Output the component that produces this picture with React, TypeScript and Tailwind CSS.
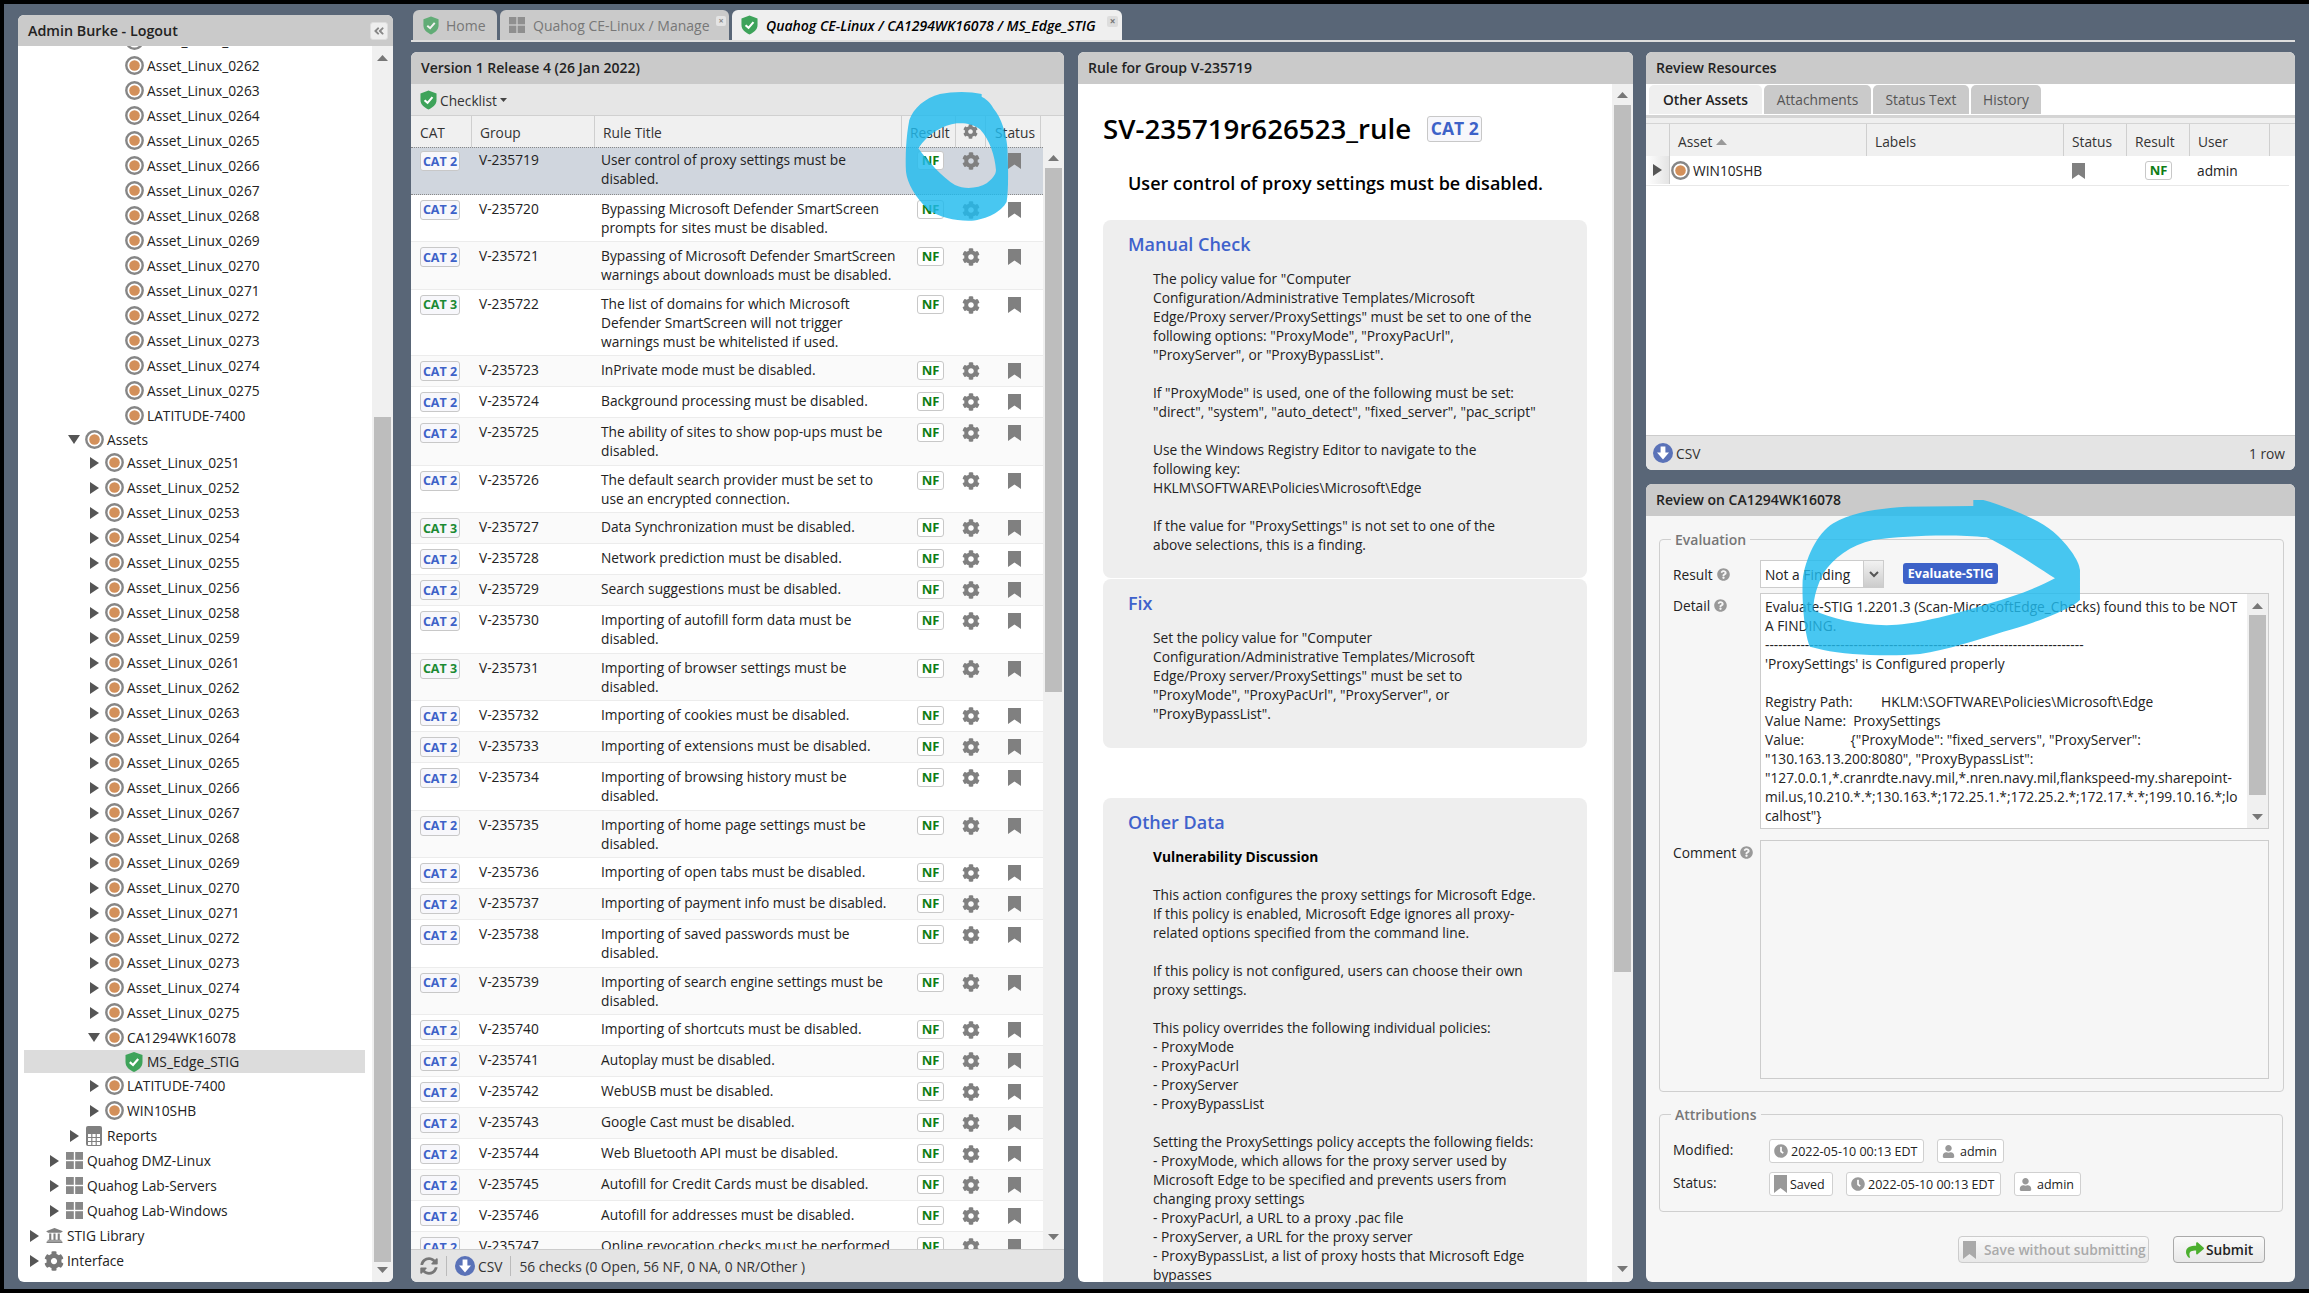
import React from "react";
import { FaCog, FaUniversity, FaClock, FaUser, FaQuestionCircle, FaShare, FaSyncAlt, FaAngleDoubleLeft } from "react-icons/fa";

type TreeKind = "asset" | "shield" | "coll" | "report" | "lib" | "gear";
type TreeRow = { l: number; t: string; k: TreeKind; a?: "r" | "d"; h?: string; sel?: boolean };

const nums1 = ["0261","0262","0263","0264","0265","0266","0267","0268","0269","0270","0271","0272","0273","0274","0275"];
const nums2 = ["0251","0252","0253","0254","0255","0256","0258","0259","0261","0262","0263","0264","0265","0266","0267","0268","0269","0270","0271","0272","0273","0274","0275"];

const tree: TreeRow[] = [
  ...nums1.map((n) => ({ l: 4, t: `Asset_Linux_${n}`, k: "asset" as TreeKind })),
  { l: 4, t: "LATITUDE-7400", k: "asset" },
  { l: 2, t: "Assets", k: "asset", a: "d", h: "h-[22px]" },
  ...nums2.map((n) => ({ l: 3, t: `Asset_Linux_${n}`, k: "asset" as TreeKind, a: "r" as const })),
  { l: 3, t: "CA1294WK16078", k: "asset", a: "d" },
  { l: 4, t: "MS_Edge_STIG", k: "shield", h: "h-[23px]", sel: true },
  { l: 3, t: "LATITUDE-7400", k: "asset", a: "r" },
  { l: 3, t: "WIN10SHB", k: "asset", a: "r" },
  { l: 2, t: "Reports", k: "report", a: "r" },
  { l: 1, t: "Quahog DMZ-Linux", k: "coll", a: "r" },
  { l: 1, t: "Quahog Lab-Servers", k: "coll", a: "r" },
  { l: 1, t: "Quahog Lab-Windows", k: "coll", a: "r" },
  { l: 0, t: "STIG Library", k: "lib", a: "r" },
  { l: 0, t: "Interface", k: "gear", a: "r" },
];

const levelPad: Record<number, string> = { 0: "pl-[6px]", 1: "pl-[26px]", 2: "pl-[46px]", 3: "pl-[66px]", 4: "pl-[86px]" };

const rows: [string, number, string, number][] = [
  ["V-235719", 2, "User control of proxy settings must be\ndisabled.", 2],
  ["V-235720", 2, "Bypassing Microsoft Defender SmartScreen\nprompts for sites must be disabled.", 2],
  ["V-235721", 2, "Bypassing of Microsoft Defender SmartScreen\nwarnings about downloads must be disabled.", 2],
  ["V-235722", 3, "The list of domains for which Microsoft\nDefender SmartScreen will not trigger\nwarnings must be whitelisted if used.", 3],
  ["V-235723", 2, "InPrivate mode must be disabled.", 1],
  ["V-235724", 2, "Background processing must be disabled.", 1],
  ["V-235725", 2, "The ability of sites to show pop-ups must be\ndisabled.", 2],
  ["V-235726", 2, "The default search provider must be set to\nuse an encrypted connection.", 2],
  ["V-235727", 3, "Data Synchronization must be disabled.", 1],
  ["V-235728", 2, "Network prediction must be disabled.", 1],
  ["V-235729", 2, "Search suggestions must be disabled.", 1],
  ["V-235730", 2, "Importing of autofill form data must be\ndisabled.", 2],
  ["V-235731", 3, "Importing of browser settings must be\ndisabled.", 2],
  ["V-235732", 2, "Importing of cookies must be disabled.", 1],
  ["V-235733", 2, "Importing of extensions must be disabled.", 1],
  ["V-235734", 2, "Importing of browsing history must be\ndisabled.", 2],
  ["V-235735", 2, "Importing of home page settings must be\ndisabled.", 2],
  ["V-235736", 2, "Importing of open tabs must be disabled.", 1],
  ["V-235737", 2, "Importing of payment info must be disabled.", 1],
  ["V-235738", 2, "Importing of saved passwords must be\ndisabled.", 2],
  ["V-235739", 2, "Importing of search engine settings must be\ndisabled.", 2],
  ["V-235740", 2, "Importing of shortcuts must be disabled.", 1],
  ["V-235741", 2, "Autoplay must be disabled.", 1],
  ["V-235742", 2, "WebUSB must be disabled.", 1],
  ["V-235743", 2, "Google Cast must be disabled.", 1],
  ["V-235744", 2, "Web Bluetooth API must be disabled.", 1],
  ["V-235745", 2, "Autofill for Credit Cards must be disabled.", 1],
  ["V-235746", 2, "Autofill for addresses must be disabled.", 1],
  ["V-235747", 2, "Online revocation checks must be performed.", 1],
];

const rowH: Record<number, string> = { 1: "h-[31px]", 2: "h-[47.5px]", 3: "h-[66.5px]" };

const AssetIcon = ({ s = 19 }: { s?: number }) => (
  <svg width={s} height={s} viewBox="0 0 19 19" className="shrink-0">
    <circle cx="9.5" cy="9.5" r="8.2" fill="#fff" stroke="#868686" strokeWidth="2.4" />
    <circle cx="9.5" cy="9.5" r="5.3" fill="#d3905a" />
  </svg>
);
const Shield = ({ w = 18, h = 20 }: { w?: number; h?: number }) => (
  <svg width={w} height={h} viewBox="0 0 18 20" className="shrink-0">
    <path d="M9 0 L17.5 3 V10 C17.5 15 13.5 18 9 20 C4.5 18 .5 15 .5 10 V3 Z" fill="#3ea35a" />
    <path d="M4.8 10.2 L8 13 L13.2 7" fill="none" stroke="#fff" strokeWidth="2.2" />
  </svg>
);
const Coll = ({ c = "#888", s = 17 }: { c?: string; s?: number }) => (
  <svg width={s} height={s} viewBox="0 0 17 17" className="shrink-0" fill={c}>
    <rect x="0" y="0" width="7.8" height="7.8" />
    <rect x="9.2" y="0" width="7.8" height="7.8" />
    <rect x="0" y="9.2" width="7.8" height="7.8" />
    <rect x="9.2" y="9.2" width="7.8" height="7.8" />
  </svg>
);
const Report = () => (
  <svg width="16" height="20" viewBox="0 0 16 20" className="shrink-0">
    <rect width="16" height="20" rx="2" fill="#808080" />
    <g fill="#fff">
      {[2, 6.4, 10.8].map((x) => [8, 12, 16].map((y) => <rect key={`${x}-${y}`} x={x} y={y} width="3.2" height="3" />))}
    </g>
  </svg>
);
const Book = ({ c = "#808080", w = 13, h = 16 }: { c?: string; w?: number; h?: number }) => (
  <svg width={w} height={h} viewBox="0 0 13 16" className="shrink-0" preserveAspectRatio="none">
    <path d="M0 0 H13 V16 L6.5 11.5 L0 16 Z" fill={c} />
  </svg>
);
const Down = ({ s = 20 }: { s?: number }) => (
  <svg width={s} height={s} viewBox="0 0 20 20" className="shrink-0">
    <circle cx="10" cy="10" r="10" fill="#5a72b8" />
    <path d="M7.6 3.5 H12.4 V9.5 H16 L10 16.5 L4 9.5 H7.6 Z" fill="#fff" />
  </svg>
);
const ArrowR = ({ c = "#555" }: { c?: string }) => (
  <svg width="9" height="12" viewBox="0 0 9 12"><path d="M0 0 L9 6 L0 12 Z" fill={c} /></svg>
);
const ArrowD = () => (
  <svg width="12" height="9" viewBox="0 0 12 9"><path d="M0 0 H12 L6 9 Z" fill="#555" /></svg>
);
const Up = ({ c = "#777" }: { c?: string }) => (
  <svg width="11" height="6" viewBox="0 0 11 6" className="shrink-0"><path d="M0 6 L5.5 0 L11 6 Z" fill={c} /></svg>
);
const Dn = ({ c = "#777" }: { c?: string }) => (
  <svg width="11" height="6" viewBox="0 0 11 6" className="shrink-0"><path d="M0 0 H11 L5.5 6 Z" fill={c} /></svg>
);

const Scrollbar = ({ outer, thumb }: { outer: string; thumb: string }) => (
  <div className={`w-[21px] shrink-0 flex flex-col items-center bg-[#f0f0f0] ${outer}`}>
    <Up />
    <div className={`w-[17px] bg-[#bdbdbd] shrink-0 ${thumb}`} />
    <div className="flex-1" />
    <Dn />
  </div>
);

const TreeIcon = ({ k }: { k: TreeKind }) => {
  if (k === "asset") return <AssetIcon />;
  if (k === "shield") return <Shield />;
  if (k === "coll") return <Coll />;
  if (k === "report") return <Report />;
  if (k === "lib") return <FaUniversity className="text-[17px] text-[#808080]" />;
  return <FaCog className="text-[20px] text-[#777]" />;
};

const Header = ({ children }: { children: React.ReactNode }) => (
  <div className="h-[32px] shrink-0 bg-[#cacaca] flex items-center px-[10px] pb-[2px] font-semibold text-[14px] text-[#222]">{children}</div>
);

const CatBadge = ({ n }: { n: number }) => (
  <div className={`w-[40px] h-[20px] rounded-[3px] border border-[#c8c8c8] bg-[#f7f7fb] flex items-center justify-center font-bold text-[12.5px] ${n === 3 ? "text-[#1b8a33]" : "text-[#3d62c8]"}`}>
    CAT {n}
  </div>
);
const NF = () => (
  <div className="w-[27px] h-[19px] rounded-[3px] border border-[#c8c8c8] bg-white flex items-center justify-center font-bold text-[13px] text-[#0f7d14]">NF</div>
);

const Th = ({ w, children, cls = "" }: { w: string; children?: React.ReactNode; cls?: string }) => (
  <div className={`${w} shrink-0 h-full flex items-center border-r border-[#cfcfcf] ${cls}`}>{children}</div>
);

const manual = `The policy value for "Computer
Configuration/Administrative Templates/Microsoft
Edge/Proxy server/ProxySettings" must be set to one of the
following options: "ProxyMode", "ProxyPacUrl",
"ProxyServer", or "ProxyBypassList".

If "ProxyMode" is used, one of the following must be set:
"direct", "system", "auto_detect", "fixed_server", "pac_script"

Use the Windows Registry Editor to navigate to the
following key:
HKLM\\SOFTWARE\\Policies\\Microsoft\\Edge

If the value for "ProxySettings" is not set to one of the
above selections, this is a finding.`;

const fix = `Set the policy value for "Computer
Configuration/Administrative Templates/Microsoft
Edge/Proxy server/ProxySettings" must be set to
"ProxyMode", "ProxyPacUrl", "ProxyServer", or
"ProxyBypassList".`;

const other = `
This action configures the proxy settings for Microsoft Edge.
If this policy is enabled, Microsoft Edge ignores all proxy-
related options specified from the command line.

If this policy is not configured, users can choose their own
proxy settings.

This policy overrides the following individual policies:
- ProxyMode
- ProxyPacUrl
- ProxyServer
- ProxyBypassList

Setting the ProxySettings policy accepts the following fields:
- ProxyMode, which allows for the proxy server used by
Microsoft Edge to be specified and prevents users from
changing proxy settings
- ProxyPacUrl, a URL to a proxy .pac file
- ProxyServer, a URL for the proxy server
- ProxyBypassList, a list of proxy hosts that Microsoft Edge
bypasses
`;

const detail = `Evaluate-STIG 1.2201.3 (Scan-MicrosoftEdge_Checks) found this to be NOT
A FINDING.
------------------------------------------------------------------------
'ProxySettings' is Configured properly

Registry Path:\u00a0\u00a0\u00a0\u00a0\u00a0\u00a0\u00a0\u00a0HKLM:\\SOFTWARE\\Policies\\Microsoft\\Edge
Value Name:\u00a0\u00a0ProxySettings
Value:\u00a0\u00a0\u00a0\u00a0\u00a0\u00a0\u00a0\u00a0\u00a0\u00a0\u00a0\u00a0\u00a0{"ProxyMode": "fixed_servers", "ProxyServer":
"130.163.13.200:8080", "ProxyBypassList":
"127.0.0.1,*.cranrdte.navy.mil,*.nren.navy.mil,flankspeed-my.sharepoint-
mil.us,10.210.*.*;130.163.*;172.25.1.*;172.25.2.*;172.17.*.*;199.10.16.*;lo
calhost"}`;

const Pill = ({ w, children }: { w: string; children: React.ReactNode }) => (
  <div className={`${w} h-[24px] rounded-[3px] border border-[#d0d0d0] bg-white flex items-center gap-[3px] pl-[4px] text-[12.5px] text-[#222]`}>{children}</div>
);
const Help = () => <FaQuestionCircle className="text-[13px] text-[#999] ml-[4px] shrink-0" />;

export default function App() {
  return (
    <div className="relative w-[2309px] h-[1293px] overflow-hidden bg-black pt-[4px] pb-[4px] pl-[4px] font-['Open_Sans',sans-serif] text-[13.75px] leading-[19px] text-[#222]">
      <div className="h-full flex bg-[#596677] pl-[14px] pr-[14px] pb-[7px]">
        {/* Navigation */}
        <div className="w-[375px] shrink-0 mt-[11px] flex flex-col rounded-[6px] overflow-hidden bg-white">
          <div className="h-[31px] shrink-0 bg-[#cacaca] flex items-center justify-between pl-[10px] pr-[5px] font-semibold text-[14.3px] text-[#222]">
            <span>Admin Burke - Logout</span>
            <div className="w-[18px] h-[18px] rounded-[3px] bg-[#eee] border border-[#ddd] flex items-center justify-center text-[#888]"><FaAngleDoubleLeft className="text-[12px]" /></div>
          </div>
          <div className="flex-1 flex min-h-0">
            <div className="flex-1 overflow-hidden">
              <div className="-mt-[18px]">
                {tree.map((r, i) => (
                  <div key={i} className={`flex items-center ${r.h ?? "h-[25px]"} ${levelPad[r.l]} ml-[6px] mr-[7px] ${r.sel ? "bg-[#dcdcdc]" : ""}`}>
                    <span className="w-[14px] shrink-0 flex items-center justify-start">
                      {r.a === "r" && <ArrowR />}
                      {r.a === "d" && <span className="-ml-[2px] flex"><ArrowD /></span>}
                    </span>
                    <span className="w-[20px] shrink-0 flex items-center justify-center"><TreeIcon k={r.k} /></span>
                    <span className="ml-[3px] whitespace-nowrap">{r.t}</span>
                  </div>
                ))}
              </div>
            </div>
            <Scrollbar outer="pt-[9px] pb-[9px]" thumb="mt-[356px] h-[845px]" />
          </div>
        </div>

        {/* Right column */}
        <div className="flex-1 ml-[18px] mt-[6px] flex flex-col min-w-0">
          <div className="flex pl-[2px] gap-[3px] h-[30px] shrink-0 text-[14px]">
            <div className="w-[84px] bg-[#cacaca] rounded-t-[6px] flex items-center pl-[10px] gap-[7px] text-[#777]">
              <span className="opacity-75 flex"><Shield w={16} h={19} /></span><span>Home</span>
            </div>
            <div className="relative w-[229px] bg-[#cacaca] rounded-t-[6px] flex items-center pl-[9px] gap-[8px] text-[#777]">
              <Coll c="#8f8f8f" s={16} /><span>Quahog CE-Linux / Manage</span>
              <span className="absolute right-[3px] top-[6px] w-[10px] h-[10px] rounded-[2px] bg-[#e4e4e4] text-[#888] text-[9px] leading-[10px] text-center font-bold">×</span>
            </div>
            <div className="relative w-[390px] bg-[#efefef] rounded-t-[6px] flex items-center pl-[9px] gap-[8px] italic font-semibold text-black">
              <Shield w={17} h={20} /><span>Quahog CE-Linux / CA1294WK16078 / MS_Edge_STIG</span>
              <span className="absolute right-[4px] top-[6px] w-[11px] h-[11px] rounded-[2px] bg-[#ddd] text-[#777] text-[10px] leading-[11px] text-center not-italic font-bold">×</span>
            </div>
          </div>
          <div className="h-[2px] shrink-0 bg-[#dedede]" />
          <div className="flex-1 mt-[10px] flex min-h-0">
            {/* Checklist */}
            <div className="w-[653px] shrink-0 flex flex-col rounded-[6px] overflow-hidden bg-white">
              <Header>Version 1 Release 4 (26 Jan 2022)</Header>
              <div className="h-[32px] shrink-0 bg-[#e6e6e6] border-b border-[#d0d0d0] flex items-center pl-[9px] gap-[3px] pt-[1px]">
                <Shield w={17} h={20} />
                <span className="text-[#333]">Checklist</span>
                <svg width="7" height="4" viewBox="0 0 7 4"><path d="M0 0 H7 L3.5 4 Z" fill="#444" /></svg>
              </div>
              <div className="h-[31px] shrink-0 bg-[#f0f0f0] flex items-center text-[#333]">
                <Th w="w-[61px]" cls="pl-[9px] pt-[2px]">CAT</Th>
                <Th w="w-[123px]" cls="pl-[8px] pt-[2px]">Group</Th>
                <Th w="w-[307px]" cls="pl-[8px] pt-[2px]">Rule Title</Th>
                <Th w="w-[54px]" cls="pl-[8px] pt-[2px]">Result</Th>
                <Th w="w-[30px]" cls="justify-center"><FaCog className="text-[15px] text-[#808080]" /></Th>
                <Th w="w-[55px]" cls="pl-[9px] pt-[2px]">Status</Th>
              </div>
              <div className="flex-1 flex min-h-0">
                <div className="flex-1 overflow-hidden">
                  {rows.map(([g, c, t, n], i) => (
                    <div key={g} className={`flex items-start box-border ${rowH[n]} ${i === 0 ? "bg-[#d0d6de] border-y border-dotted border-[#888] pt-[3px]" : i % 2 ? "pt-[5px] bg-white border-b border-[#ececec]" : "pt-[5px] bg-[#fafafa] border-b border-[#ececec]"}`}>
                      <div className="w-[61px] shrink-0 pl-[9px]"><CatBadge n={c} /></div>
                      <div className="w-[123px] shrink-0 pl-[7px] -mt-[1px]">{g}</div>
                      <div className="w-[307px] shrink-0 pl-[6px] -mt-[1px] leading-[19px] whitespace-pre-line">{t}</div>
                      <div className="w-[54px] shrink-0 pl-[15px]"><NF /></div>
                      <div className="w-[30px] shrink-0 flex justify-center pt-[1px]"><FaCog className="text-[18px] text-[#808080]" /></div>
                      <div className="w-[55px] shrink-0 pl-[22px] pt-[2px]"><Book /></div>
                    </div>
                  ))}
                </div>
                <Scrollbar outer="pt-[8px] pb-[9px]" thumb="mt-[7px] h-[524px]" />
              </div>
              <div className="h-[33px] shrink-0 bg-[#e4e4e4] border-t border-[#ccc] flex items-center pl-[9px] text-[#333]">
                <FaSyncAlt className="text-[18px] text-[#777]" />
                <span className="w-px h-[20px] bg-[#bbb] ml-[8px] mr-[8px]" />
                <Down />
                <span className="ml-[3px]">CSV</span>
                <span className="w-px h-[20px] bg-[#bbb] ml-[8px] mr-[8px]" />
                <span>56 checks (0 Open, 56 NF, 0 NA, 0 NR/Other )</span>
              </div>
            </div>

            {/* Rule */}
            <div className="w-[555px] ml-[14px] shrink-0 flex flex-col rounded-[6px] overflow-hidden bg-white">
              <Header>Rule for Group V-235719</Header>
              <div className="flex-1 flex min-h-0">
                <div className="flex-1 overflow-hidden pl-[25px]">
                  <div className="flex items-center pt-[30px] h-[59px]">
                    <span className="text-[27.7px] leading-[29px] font-semibold text-black">SV-235719r626523_rule</span>
                    <span className="ml-[16px] w-[55px] h-[26px] rounded-[3px] border border-[#c8c8c8] bg-[#f7f7fb] flex items-center justify-center font-bold text-[17.5px] text-[#3d62c8]">CAT 2</span>
                  </div>
                  <div className="mt-[28px] pl-[25px] text-[18px] leading-[24px] font-semibold text-black">User control of proxy settings must be disabled.</div>
                  <div className="mt-[25px] w-[484px] h-[358px] bg-[#eeeeee] rounded-[8px] pl-[25px] pt-[11px]">
                    <div className="text-[18px] leading-[26px] font-semibold text-[#3f62cc]">Manual Check</div>
                    <div className="pl-[25px] mt-[12px] whitespace-pre">{manual}</div>
                  </div>
                  <div className="mt-[1px] w-[484px] h-[169px] bg-[#eeeeee] rounded-[8px] pl-[25px] pt-[11px]">
                    <div className="text-[18px] leading-[26px] font-semibold text-[#3f62cc]">Fix</div>
                    <div className="pl-[25px] mt-[12px] whitespace-pre">{fix}</div>
                  </div>
                  <div className="mt-[50px] w-[484px] h-[600px] bg-[#eeeeee] rounded-[8px] pl-[25px] pt-[11px]">
                    <div className="text-[18px] leading-[26px] font-semibold text-[#3f62cc]">Other Data</div>
                    <div className="pl-[25px] mt-[12px] font-bold text-black">Vulnerability Discussion</div>
                    <div className="pl-[25px] whitespace-pre">{other}</div>
                  </div>
                </div>
                <Scrollbar outer="pt-[8px] pb-[10px]" thumb="mt-[7px] h-[867px]" />
              </div>
            </div>

            {/* Right stack */}
            <div className="w-[649px] ml-[13px] shrink-0 flex flex-col">
              <div className="h-[418px] shrink-0 flex flex-col rounded-[6px] overflow-hidden bg-white">
                <Header>Review Resources</Header>
                <div className="flex gap-[2px] pl-[3px] pt-[1px] h-[31px] shrink-0">
                  <div className="w-[113px] h-[29px] bg-[#efefef] rounded-t-[5px] flex items-center justify-center font-semibold text-[#222]">Other Assets</div>
                  <div className="w-[107px] h-[29px] bg-[#cacaca] rounded-t-[5px] flex items-center justify-center text-[#555]">Attachments</div>
                  <div className="w-[96px] h-[29px] bg-[#cacaca] rounded-t-[5px] flex items-center justify-center text-[#555]">Status Text</div>
                  <div className="w-[70px] h-[29px] bg-[#cacaca] rounded-t-[5px] flex items-center justify-center text-[#555]">History</div>
                </div>
                <div className="h-[3px] shrink-0 bg-[#d4d4d4]" />
                <div className="h-[6px] shrink-0 bg-[#efefef] border-b border-[#d4d4d4]" />
                <div className="h-[32px] shrink-0 bg-[#f0f0f0] flex items-center text-[#333]">
                  <Th w="w-[24px]" />
                  <Th w="w-[197px]" cls="pl-[8px] gap-[4px] pt-[3px]">Asset <Up c="#999" /></Th>
                  <Th w="w-[197px]" cls="pl-[8px] pt-[3px]">Labels</Th>
                  <Th w="w-[63px]" cls="pl-[8px] pt-[3px]">Status</Th>
                  <Th w="w-[63px]" cls="pl-[8px] pt-[3px]">Result</Th>
                  <Th w="w-[80px]" cls="pl-[8px] pt-[3px]">User</Th>
                </div>
                <div className="w-[643px] h-[30px] shrink-0 flex items-center border-b border-[#e8e8e8] pb-[1px]">
                  <div className="w-[24px] h-full shrink-0 bg-gradient-to-r from-white to-[#e4e4e4] border-r border-[#ccc] flex items-center justify-center"><ArrowR /></div>
                  <div className="w-[197px] shrink-0 flex items-center pl-[1px] gap-[3px]"><AssetIcon />WIN10SHB</div>
                  <div className="w-[197px] shrink-0" />
                  <div className="w-[63px] shrink-0 pl-[8px] pt-[2px]"><Book /></div>
                  <div className="w-[63px] shrink-0 pl-[18px]"><NF /></div>
                  <div className="w-[80px] shrink-0 pl-[7px]">admin</div>
                </div>
                <div className="flex-1" />
                <div className="h-[35px] shrink-0 bg-[#e4e4e4] border-t border-[#ccc] flex items-center justify-between pl-[7px] pr-[10px] text-[#333]">
                  <span className="flex items-center gap-[3px]"><Down />CSV</span>
                  <span>1 row</span>
                </div>
              </div>

              <div className="flex-1 mt-[14px] flex flex-col rounded-[6px] overflow-hidden bg-[#f6f6f6]">
                <Header>Review on CA1294WK16078</Header>
                <div className="flex-1 pt-[14px] pl-[13px] pr-[12px]">
                  <fieldset className="border border-[#cfcfcf] rounded-[4px] pl-[13px] pr-[14px] pb-[12px]">
                    <legend className="-ml-[2px] px-[4px] font-semibold text-[14px] text-[#777]">Evaluation</legend>
                    <div className="flex mt-[11px] h-[28px]">
                      <div className="w-[87px] shrink-0 flex items-center">Result <Help /></div>
                      <div className="w-[124px] h-[28px] bg-white border border-[#ccc] flex items-center pl-[4px] relative">
                        Not a Finding
                        <span className="absolute right-0 top-0 bottom-0 w-[20px] bg-gradient-to-b from-[#f2f2f2] to-[#ccc] border-l border-[#ccc] flex items-center justify-center">
                          <svg width="10" height="7" viewBox="0 0 10 7"><path d="M1 1 L5 5 L9 1" fill="none" stroke="#555" strokeWidth="2" /></svg>
                        </span>
                      </div>
                      <div className="ml-[19px] mt-[3px] w-[95px] h-[21px] rounded-[3px] bg-[#3d62c8] text-white font-bold text-[12.5px] flex items-center justify-center">Evaluate-STIG</div>
                    </div>
                    <div className="flex mt-[5px] h-[236px]">
                      <div className="w-[87px] shrink-0 flex items-start pt-[3px]"><span className="flex items-center">Detail <Help /></span></div>
                      <div className="w-[509px] h-[236px] bg-white border border-[#ccc] flex">
                        <div className="flex-1 pl-[4px] pt-[3px] whitespace-pre overflow-hidden">{detail}</div>
                        <Scrollbar outer="pt-[9px] pb-[8px]" thumb="mt-[6px] h-[180px]" />
                      </div>
                    </div>
                    <div className="flex mt-[11px] h-[239px]">
                      <div className="w-[87px] shrink-0 flex items-start pt-[3px]"><span className="flex items-center">Comment <Help /></span></div>
                      <div className="w-[509px] h-[239px] border border-[#ccc]" />
                    </div>
                  </fieldset>
                  <fieldset className="mt-[13px] border border-[#cfcfcf] rounded-[4px] pl-[13px] pb-[15px]">
                    <legend className="-ml-[2px] px-[4px] font-semibold text-[14px] text-[#777]">Attributions</legend>
                    <div className="flex mt-[15px]">
                      <div className="w-[96px] shrink-0 pt-[1px]">Modified:</div>
                      <Pill w="w-[155px]"><FaClock className="text-[14px] text-[#999] shrink-0" />2022-05-10 00:13 EDT</Pill>
                      <div className="w-[13px]" />
                      <Pill w="w-[67px]"><FaUser className="text-[13px] text-[#999] shrink-0 mr-[2px]" />admin</Pill>
                    </div>
                    <div className="flex mt-[9px]">
                      <div className="w-[96px] shrink-0 pt-[1px]">Status:</div>
                      <Pill w="w-[64px]"><Book c="#999" w={13} h={18} />Saved</Pill>
                      <div className="w-[13px]" />
                      <Pill w="w-[155px]"><FaClock className="text-[14px] text-[#999] shrink-0" />2022-05-10 00:13 EDT</Pill>
                      <div className="w-[13px]" />
                      <Pill w="w-[67px]"><FaUser className="text-[13px] text-[#999] shrink-0 mr-[2px]" />admin</Pill>
                    </div>
                  </fieldset>
                  <div className="flex justify-end mt-[24px] pr-[18px]">
                    <div className="w-[191px] h-[27px] rounded-[4px] border border-[#ccc] bg-gradient-to-b from-[#fafafa] to-[#e8e8e8] flex items-center pl-[4px] gap-[8px] font-semibold text-[#aaa]">
                      <Book c="#aaa" w={13} h={18} />Save without submitting
                    </div>
                    <div className="ml-[24px] w-[92px] h-[27px] rounded-[4px] border border-[#aaa] bg-gradient-to-b from-[#fafafa] to-[#e8e8e8] flex items-center pl-[12px] gap-[2px] font-semibold text-[#222]">
                      <FaShare className="text-[18px] text-[#4caf2f] shrink-0" />Submit
                    </div>
                  </div>
                </div>
              </div>
            </div>
          </div>
        </div>
      </div>

      {/* Hand-drawn highlighter marks */}
      <svg className="absolute left-0 top-0 pointer-events-none" width="2309" height="1293" viewBox="0 0 2309 1293">
        <g transform="translate(890 80) scale(0.3333)" fill="#20bbee" fillOpacity="0.82" fillRule="evenodd">
          <path d="M275 42 C240 34 190 34 150 42 C105 54 70 85 58 120 C48 170 46 230 48 275 C52 310 75 350 115 390 C150 412 200 424 245 422 C290 418 335 395 350 365 C356 330 355 260 352 200 C348 160 335 115 310 85 C300 65 285 55 275 50 Z M200 130 C160 135 115 160 85 205 C110 240 160 295 195 315 C225 330 265 325 290 310 C305 298 318 285 318 270 C315 230 300 180 270 148 C250 132 225 128 200 130 Z" />
        </g>
        <g transform="translate(1790 490) scale(0.3333)" fill="#20bbee" fillOpacity="0.82" fillRule="evenodd">
          <path d="M550 30 L580 30 C650 50 740 85 790 125 C830 160 868 210 870 240 L870 330 C840 360 720 405 640 425 C560 450 470 480 390 492 C300 500 170 495 100 480 L60 470 C45 440 35 340 38 270 C45 210 80 130 130 100 C190 65 270 55 350 50 L550 48 Z M590 142 C500 132 350 135 250 150 C180 165 130 205 100 250 C85 280 70 320 70 360 C120 385 200 403 290 406 C370 405 470 380 600 340 C670 320 750 290 795 265 C740 230 660 175 590 142 Z" />
        </g>
      </svg>
    </div>
  );
}
